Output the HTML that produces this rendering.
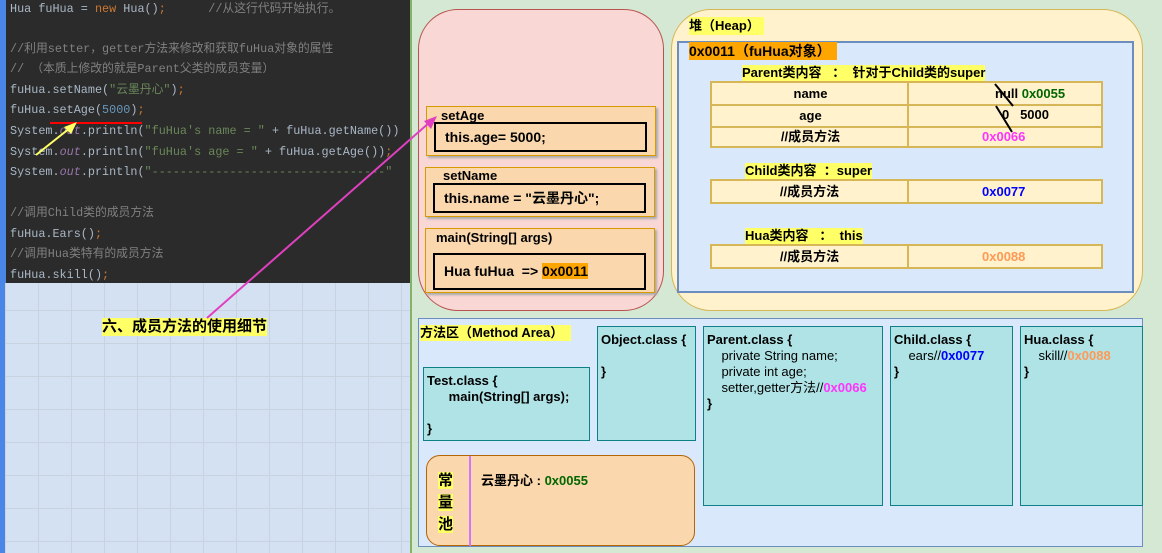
<!DOCTYPE html>
<html><head><meta charset="utf-8"><style>
*{margin:0;padding:0;box-sizing:border-box}
body{width:1162px;height:553px;overflow:hidden;position:relative;background:#d4e1f2;font-family:"Liberation Sans","Noto Sans CJK SC",sans-serif;font-size:13px;line-height:16px;color:#000}
.a{position:absolute}
.grid{left:5px;top:283px;width:405px;height:270px;background-image:linear-gradient(#c9d3e0 1px,transparent 1px),linear-gradient(90deg,#c9d3e0 1px,transparent 1px);background-size:33px 33px;background-position:0 -6px}
.code{left:6px;top:0;width:404px;height:283px;background:#2b2b2b;font-family:"Liberation Mono","Noto Sans CJK SC",monospace;font-size:11.8px;color:#a9b7c6;white-space:pre;overflow:hidden}
.code div{position:absolute;left:4px;line-height:16px;height:16px}
.k{color:#cc7832}.c{color:#808080}.s{color:#6a8759}.n{color:#6897bb}.o{color:#9876aa;font-style:italic}
.b{font-weight:bold}
.y{background:#ffff66}
.frame{background:#fad7ac;border:1px solid #d79b00;box-shadow:2px 2px 2px #aaa}
.inner{border:2px solid #000;background:#fad7ac;font-size:14px;font-weight:bold;padding-left:9px}
.tbl{background:#fff2cc;border:2px solid #d6b656}
.cell{position:absolute;top:0;height:100%;border-right:2px solid #d6b656;font-weight:bold;text-align:center}
.cls{background:#b0e3e6;border:1px solid #0e8088;font-weight:bold;padding:5px 3px;line-height:16px}
</style></head><body>
<div class="a" style="left:0;top:0;width:6px;height:553px;background:#4a86e8"></div>
<div class="a grid"></div>
<div class="a code">
<div style="top:1px">Hua fuHua = <span class="k">new</span> Hua()<span class="k">;</span>      <span class="c">//从这行代码开始执行。</span></div>
<div style="top:41px" class="c">//利用setter，getter方法来修改和获取fuHua对象的属性</div>
<div style="top:61px" class="c">// （本质上修改的就是Parent父类的成员变量）</div>
<div style="top:82px">fuHua.setName(<span class="s">"云墨丹心"</span>)<span class="k">;</span></div>
<div style="top:102px">fuHua.setAge(<span class="n">5000</span>)<span class="k">;</span></div>
<div style="top:123px">System.<span class="o">out</span>.println(<span class="s">"fuHua's name = "</span> + fuHua.getName())</div>
<div style="top:144px">System.<span class="o">out</span>.println(<span class="s">"fuHua's age = "</span> + fuHua.getAge())<span class="k">;</span></div>
<div style="top:164px">System.<span class="o">out</span>.println(<span class="s">"---------------------------------"</span></div>
<div style="top:205px" class="c">//调用Child类的成员方法</div>
<div style="top:226px">fuHua.Ears()<span class="k">;</span></div>
<div style="top:246px" class="c">//调用Hua类特有的成员方法</div>
<div style="top:267px">fuHua.skill()<span class="k">;</span></div>
</div>
<div class="a b y" style="left:102px;top:318px;font-size:15px;line-height:18px">六、成员方法的使用细节</div>

<div class="a" style="left:410px;top:0;width:752px;height:553px;background:#d5e8d4;border-left:2px solid #82b366"></div>
<div class="a" style="left:418px;top:9px;width:246px;height:302px;background:#f8d7d5;border:1px solid #b85450;border-radius:40px"></div>
<div class="a frame" style="left:426px;top:106px;width:230px;height:50px"><div class="a b" style="left:14px;top:1px;font-size:13px">setAge</div><div class="a inner" style="left:7px;top:15px;width:213px;height:30px;line-height:26px">this.age= 5000;</div></div>
<div class="a frame" style="left:425px;top:167px;width:230px;height:50px"><div class="a b" style="left:17px;top:0">setName</div><div class="a inner" style="left:7px;top:15px;width:213px;height:30px;line-height:26px">this.name = "云墨丹心";</div></div>
<div class="a frame" style="left:425px;top:228px;width:230px;height:65px"><div class="a b" style="left:10px;top:1px">main(String[] args)</div><div class="a inner" style="left:7px;top:24px;width:213px;height:37px;line-height:33px">Hua fuHua &nbsp;=&gt; <span style="background:#ffa500">0x0011</span></div></div>

<div class="a" style="left:671px;top:9px;width:472px;height:302px;background:#fff2cc;border:1px solid #d6b656;border-radius:40px"></div>
<div class="a b y" style="left:689px;top:17px;padding:0 4px 0 0;line-height:18px">堆（Heap）</div>
<div class="a" style="left:677px;top:41px;width:457px;height:252px;background:#dae8fc;border:2px solid #6c8ebf"></div>
<div class="a b" style="left:689px;top:42px;background:#ffa500;font-size:14px;line-height:18px;padding-right:6px">0x0011（fuHua对象）</div>
<div class="a b y" style="left:742px;top:65px">Parent类内容 &nbsp; ： &nbsp;针对于Child类的super</div>
<div class="a tbl" style="left:710px;top:81px;width:393px;height:67px">
<div class="a" style="left:0;top:21px;width:100%;border-top:2px solid #d6b656"></div>
<div class="a" style="left:0;top:43px;width:100%;border-top:2px solid #d6b656"></div>
<div class="cell" style="left:0;width:197px"></div>
<div class="a b" style="left:0;width:197px;top:3px;text-align:center">name</div>
<div class="a b" style="left:0;width:197px;top:25px;text-align:center">age</div>
<div class="a b" style="left:0;width:197px;top:46px;text-align:center">//成员方法</div>
<div class="a b" style="left:283px;top:3px">null <span style="color:#006600">0x0055</span></div>
<div class="a b" style="left:290px;top:24px">0 &nbsp; 5000</div>
<div class="a b" style="left:270px;top:46px;color:#ff33ff">0x0066</div>
</div>
<svg class="a" style="left:980px;top:80px" width="50" height="70"><line x1="15" y1="4" x2="33" y2="26" stroke="#000" stroke-width="2"/><line x1="16" y1="26" x2="32" y2="52" stroke="#000" stroke-width="2"/></svg>
<div class="a b y" style="left:745px;top:163px">Child类内容 &nbsp;：super</div>
<div class="a tbl" style="left:710px;top:179px;width:393px;height:25px"><div class="cell" style="left:0;width:197px;line-height:21px">//成员方法</div><div class="a b" style="left:270px;top:3px;color:#0000ff">0x0077</div></div>
<div class="a b y" style="left:745px;top:228px">Hua类内容 &nbsp; ： &nbsp;this</div>
<div class="a tbl" style="left:710px;top:244px;width:393px;height:25px"><div class="cell" style="left:0;width:197px;line-height:21px">//成员方法</div><div class="a b" style="left:270px;top:3px;color:#ff9955">0x0088</div></div>

<div class="a" style="left:418px;top:318px;width:725px;height:229px;background:#dae8fc;border:1px solid #6c8ebf"></div>
<div class="a b y" style="left:420px;top:325px;padding-right:8px">方法区（Method Area）</div>
<div class="a cls" style="left:423px;top:367px;width:167px;height:74px">Test.class {<br>&nbsp; &nbsp; &nbsp; main(String[] args);<br><br>}</div>
<div class="a cls" style="left:597px;top:326px;width:99px;height:115px">Object.class {<br><br>}</div>
<div class="a cls" style="left:703px;top:326px;width:180px;height:180px">Parent.class {<br><span style="font-weight:normal">&nbsp; &nbsp; private String name;<br>&nbsp; &nbsp; private int age;<br>&nbsp; &nbsp; setter,getter方法//</span><span style="color:#ff33ff">0x0066</span><br>}</div>
<div class="a cls" style="left:890px;top:326px;width:123px;height:180px">Child.class {<br><span style="font-weight:normal">&nbsp; &nbsp; ears//</span><span style="color:#0000ff">0x0077</span><br>}</div>
<div class="a cls" style="left:1020px;top:326px;width:123px;height:180px">Hua.class {<br><span style="font-weight:normal">&nbsp; &nbsp; skill//</span><span style="color:#ff9955">0x0088</span><br>}</div>
<div class="a" style="left:426px;top:455px;width:269px;height:91px;background:#fad7ac;border:1px solid #b46504;border-radius:14px"></div>
<div class="a" style="left:469px;top:456px;width:2px;height:90px;background:#cc77ff"></div>
<div class="a b" style="left:438px;top:470px;font-size:15px;line-height:22px;width:18px"><span class="y">常</span><br><span class="y">量</span><br><span class="y">池</span></div>
<div class="a b" style="left:481px;top:473px">云墨丹心 : <span style="color:#006600">0x0055</span></div>

<svg class="a" style="left:0;top:0" width="1162" height="553">
<line x1="50" y1="123" x2="142" y2="123" stroke="#ff0000" stroke-width="2"/>
<line x1="36" y1="155" x2="70" y2="128" stroke="#ffff66" stroke-width="2"/>
<polygon points="77,122 64,127 71,134" fill="#ffff66"/>
<line x1="207" y1="318" x2="430" y2="122" stroke="#e040c0" stroke-width="2"/>
<polygon points="437,116 424,121 431,129" fill="#e040c0"/>
</svg>
</body></html>
